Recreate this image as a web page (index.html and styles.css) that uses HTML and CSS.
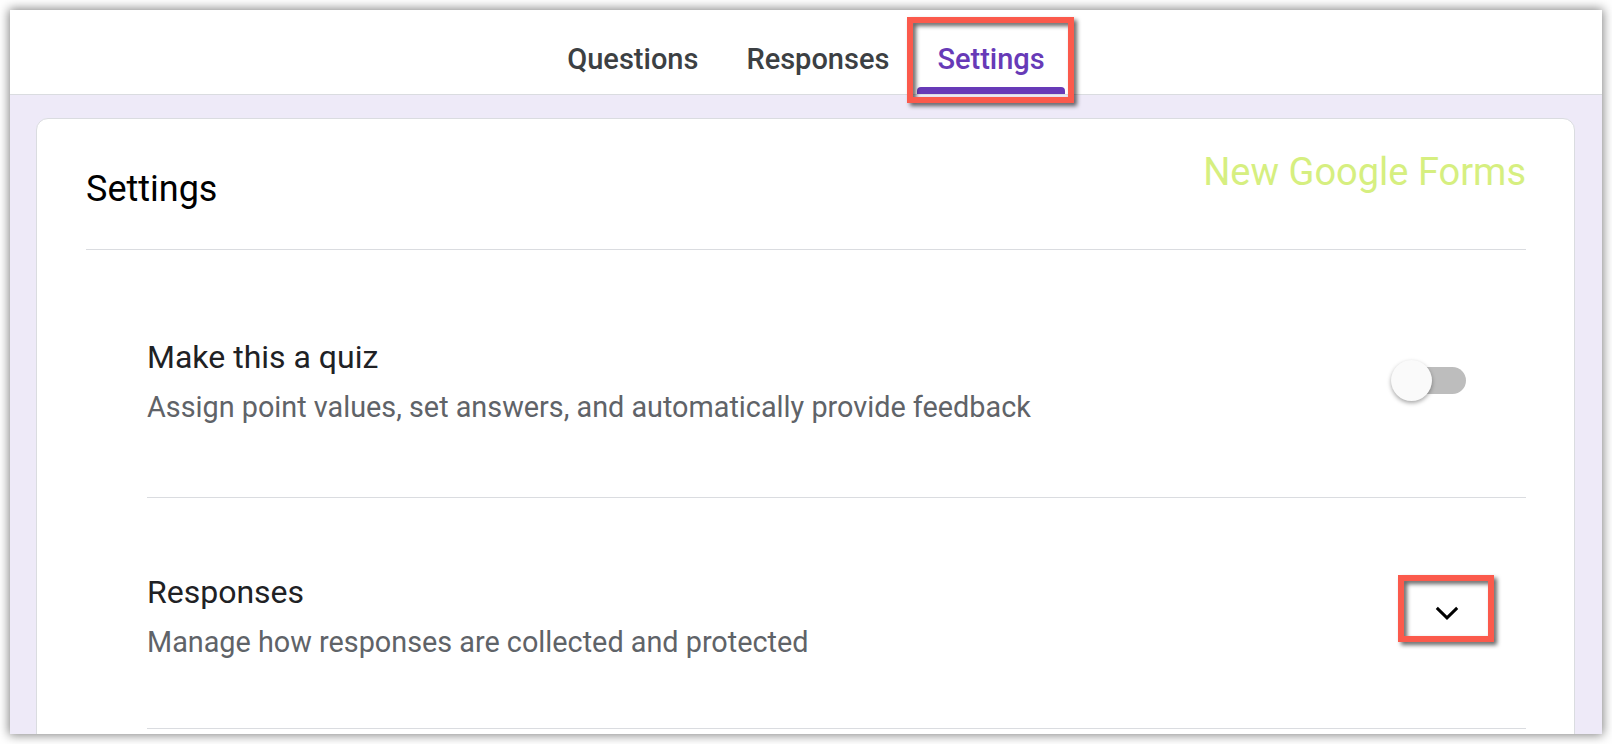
FILE: index.html
```html
<!DOCTYPE html>
<html lang="en">
<head>
    <meta charset="UTF-8">
    <meta name="viewport" content="width=device-width, initial-scale=1.0">
    <title>Google Forms - Settings</title>
    <link rel="stylesheet" href="styles.css">
</head>
<body>
    <div class="window">
        <header class="tabs">
            <div class="tab">Questions<span class="tab-bar"></span></div>
            <div class="tab">Responses<span class="tab-bar"></span></div>
            <div class="tab active">Settings<span class="tab-bar"></span><span class="mark mark-tab"></span></div>
        </header>

        <main class="content">
            <section class="card">
                <div class="card-head">
                    <h1>Settings</h1>
                    <span class="brand">New Google Forms</span>
                </div>

                <div class="item item-quiz">
                    <div class="item-text">
                        <h2>Make this a quiz</h2>
                        <p>Assign point values, set answers, and automatically provide feedback</p>
                    </div>
                    <div class="toggle">
                        <span class="track"></span>
                        <span class="knob"></span>
                    </div>
                </div>

                <div class="item item-responses">
                    <div class="item-text">
                        <h2>Responses</h2>
                        <p>Manage how responses are collected and protected</p>
                    </div>
                    <div class="expand">
                        <svg width="36" height="36" viewBox="0 0 24 24">
                            <path d="M5.2 8.6 L12 15.2 L18.8 8.6" fill="none" stroke="#000" stroke-width="2"/>
                        </svg>
                        <span class="mark mark-expand"></span>
                    </div>
                </div>
            </section>
        </main>
    </div>
</body>
</html>
```

FILE: styles.css
```css
body {
    margin: 0;
    padding: 10px;
    background: #fff;
    font-family: Roboto, "Liberation Sans", sans-serif;
}
.window {
    width: 1592px;
    height: 724px;
    overflow: hidden;
    background: #eeeaf8;
    box-shadow: 0 0 10px 1px rgba(0, 0, 0, 0.5);
}
.tabs {
    height: 84px;
    background: #fff;
    border-bottom: 1px solid #dadce0;
    display: flex;
    justify-content: center;
    gap: 8px;
}
.tab {
    position: relative;
    display: flex;
    flex-direction: column;
    align-items: center;
    padding: 32px 20px 0;
    font-size: 29px;
    font-weight: 500;
    line-height: 34px;
    color: #3c4043;
}
.tab-bar {
    margin: auto -20px 0;
    align-self: stretch;
    height: 7px;
    border-radius: 4px 4px 0 0;
}
.tab.active {
    color: #673ab7;
}
.tab.active .tab-bar {
    background: #673ab7;
}
.mark {
    position: absolute;
    border: 6px solid #fb5a4c;
    filter: drop-shadow(3px 3px 2px rgba(0, 0, 0, 0.6));
}
.mark-tab {
    top: 7px;
    left: -10px;
    right: -9px;
    bottom: -9px;
}
.content {
    padding: 23px 27px 0 26px;
}
.card {
    background: #fff;
    border: 1px solid #dadce0;
    border-radius: 12px;
    padding: 0 48px 0 49px;
    height: 700px;
}
.card-head {
    display: flex;
    justify-content: space-between;
    align-items: flex-start;
    height: 131px;
    box-sizing: border-box;
    padding-top: 31px;
    border-bottom: 1px solid #dadce0;
}
.card-head h1 {
    margin: 17px 0 0;
    font-size: 36px;
    font-weight: 400;
    line-height: 44px;
    color: #000;
}
.brand {
    font-size: 38px;
    line-height: 44px;
    color: #d6ef80;
}
.item {
    display: flex;
    align-items: center;
    justify-content: space-between;
    margin-left: 61px;
    border-bottom: 1px solid #dadce0;
}
.item-quiz {
    padding: 87px 60px 73px 0;
}
.item-responses {
    padding: 74px 55px 69px 0;
}
.item h2 {
    margin: 0;
    font-size: 32px;
    font-weight: 400;
    line-height: 40px;
    color: #202124;
}
.item p {
    margin: 13px 0 0;
    font-size: 28.8px;
    line-height: 34px;
    color: #5f6368;
}
.toggle {
    position: relative;
    width: 75px;
    height: 41px;
}
.track {
    position: absolute;
    left: 7px;
    right: 0;
    top: 7px;
    height: 27px;
    border-radius: 14px;
    background: #bdbdbd;
}
.knob {
    position: absolute;
    left: 0;
    top: 0;
    width: 41px;
    height: 41px;
    border-radius: 50%;
    background: #fafafa;
    box-shadow: 0 2px 4px rgba(0, 0, 0, 0.35);
}
.expand {
    position: relative;
    width: 48px;
    height: 48px;
    margin-bottom: 6px;
    display: flex;
    align-items: center;
    justify-content: center;
}
.mark-expand {
    top: -14px;
    left: -25px;
    right: -23px;
    bottom: -5px;
}
```
